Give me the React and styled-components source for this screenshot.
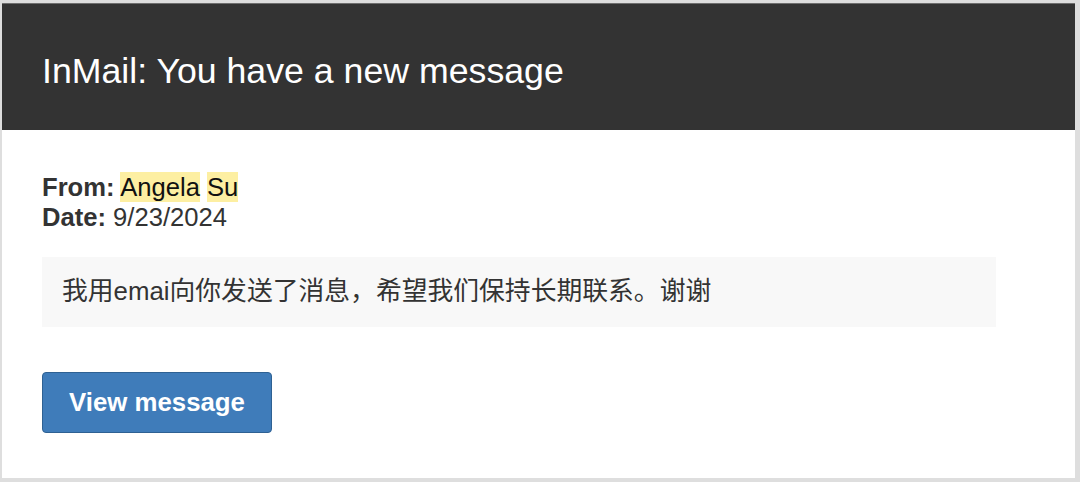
import React from "react";
import styled, { createGlobalStyle } from "styled-components";

const Global = createGlobalStyle`
  html, body {
    margin: 0;
    padding: 0;
    background: #dedede;
  }
  body {
    font-family: "Liberation Sans", Arial, "Noto Sans CJK SC", sans-serif;
    color: #333333;
  }
  #root {
    padding: 3px 5px 5px 2px;
  }
`;

const Card = styled.div`
  background: #ffffff;
  display: flex;
  flex-direction: column;
`;

const Header = styled.header`
  background: #333333;
  border-top: 1px solid #6e6e6e;
  padding: 47px 40px 38px;
`;

const Title = styled.h1`
  margin: 0;
  font-weight: 400;
  font-size: 35.7px;
  line-height: 41px;
  color: #ffffff;
`;

const Body = styled.div`
  padding: 43px 40px 45px;
  display: flex;
  flex-direction: column;
  align-items: flex-start;
`;

const Meta = styled.div`
  font-size: 25.6px;
  line-height: 29.5px;
  color: #333333;
`;

const MetaRow = styled.div``;

const Label = styled.strong`
  font-weight: 700;
`;

const Mark = styled.span`
  background: #fdefa2;
  color: #111111;
  padding: 1px 0;
`;

const MessageBox = styled.div`
  margin-top: 25px;
  width: 954px;
  box-sizing: border-box;
  background: #f8f8f8;
  padding: 20px 20px;
  font-size: 25.8px;
  line-height: 29.5px;
  color: #333333;
`;

const Button = styled.a`
  margin-top: 45px;
  display: inline-flex;
  align-items: center;
  justify-content: center;
  box-sizing: border-box;
  width: 230px;
  height: 61px;
  background: #3f7cba;
  border: 1px solid #2e6193;
  border-radius: 4px;
  color: #ffffff;
  font-weight: 700;
  font-size: 25.8px;
  text-decoration: none;
  cursor: pointer;
`;

export default function App() {
  return (
    <>
      <Global />
      <Card>
        <Header>
          <Title>InMail: You have a new message</Title>
        </Header>
        <Body>
          <Meta>
            <MetaRow>
              <Label>From:</Label> <Mark>Angela</Mark> <Mark>Su</Mark>
            </MetaRow>
            <MetaRow>
              <Label>Date:</Label> 9/23/2024
            </MetaRow>
          </Meta>
          <MessageBox>我用emai向你发送了消息，希望我们保持长期联系。谢谢</MessageBox>
          <Button>View message</Button>
        </Body>
      </Card>
    </>
  );
}
